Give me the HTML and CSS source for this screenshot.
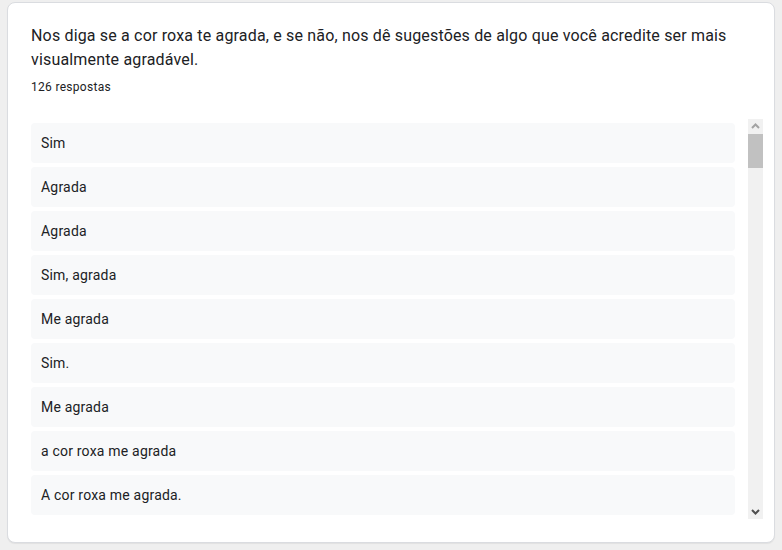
FILE: index.html
```html
<!DOCTYPE html>
<html lang="pt-BR">
<head>
<meta charset="utf-8">
<title>Respostas</title>
<link rel="stylesheet" href="styles.css">
</head>
<body>
  <div class="card">
    <div class="title">Nos diga se a cor roxa te agrada, e se não, nos dê sugestões de algo que você acredite ser mais visualmente agradável.</div>
    <div class="count">126 respostas</div>
    <div class="answers">
      <div class="list">
        <div class="item">Sim</div>
        <div class="item">Agrada</div>
        <div class="item">Agrada</div>
        <div class="item">Sim, agrada</div>
        <div class="item">Me agrada</div>
        <div class="item">Sim.</div>
        <div class="item">Me agrada</div>
        <div class="item">a cor roxa me agrada</div>
        <div class="item">A cor roxa me agrada.</div>
      </div>
      <div class="scrollbar">
        <div class="sb-btn">
          <svg width="15" height="15" viewBox="0 0 15 15"><path d="M4 9 L7.5 5.5 L11 9" fill="none" stroke="#a3a3a3" stroke-width="2"/></svg>
        </div>
        <div class="sb-track">
          <div class="sb-thumb"></div>
        </div>
        <div class="sb-btn">
          <svg width="15" height="15" viewBox="0 0 15 15"><path d="M4 6 L7.5 9.5 L11 6" fill="none" stroke="#505050" stroke-width="2"/></svg>
        </div>
      </div>
    </div>
  </div>
</body>
</html>
```
FILE: styles.css
```css
html, body {
  margin: 0;
  padding: 0;
  background: #efefef;
}
body {
  padding: 2px 7px 7px;
  font-family: Roboto, "Liberation Sans", Arial, sans-serif;
  color: #202124;
}
.card {
  background: #fff;
  border: 1px solid #dadce0;
  border-radius: 8px;
  padding: 21px 11px 23px 23px;
  box-shadow: 0 1px 1px rgba(0,0,0,0.06);
}
.title {
  font-size: 16px;
  line-height: 24px;
  letter-spacing: 0.17px;
  color: #202124;
  padding-right: 20px;
}
.count {
  margin-top: 7px;
  font-size: 12px;
  line-height: 16px;
  letter-spacing: 0.3px;
}
.answers {
  margin-top: 24px;
  display: flex;
  gap: 13px;
  height: 400px;
}
.list {
  flex: 1;
  overflow: hidden;
  padding-top: 4px;
  display: flex;
  flex-direction: column;
  gap: 4px;
}
.item {
  flex: none;
  height: 40px;
  box-sizing: border-box;
  padding: 0 10px 1px;
  display: flex;
  align-items: center;
  background: #f8f9fa;
  border-radius: 4px;
  font-size: 14px;
  letter-spacing: 0.2px;
  color: #202124;
}
.scrollbar {
  width: 15px;
  display: flex;
  flex-direction: column;
  background: #f1f1f1;
}
.sb-btn {
  height: 15px;
  display: flex;
}
.sb-track {
  flex: 1;
}
.sb-thumb {
  height: 34px;
  background: #c1c1c1;
}
```
